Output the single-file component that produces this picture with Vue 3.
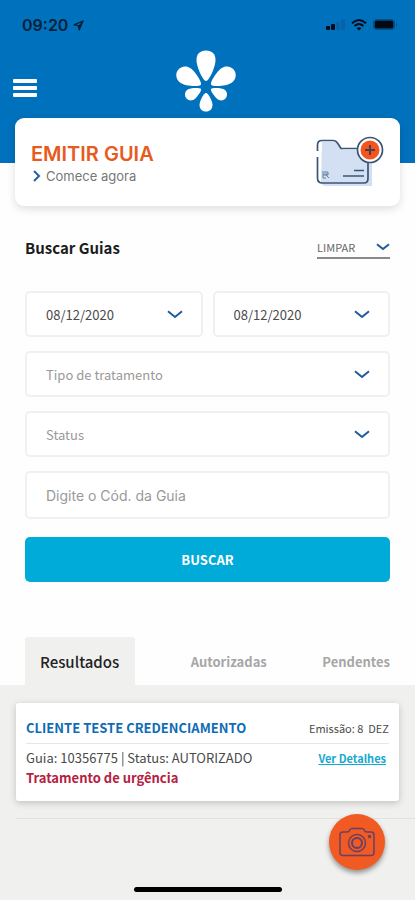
<script setup>
import { ref } from 'vue'

const from = ref('08/12/2020')
const to = ref('08/12/2020')
const type = ref('')
const status = ref('')
const code = ref('')
const sort = ref('LIMPAR')
const active = ref('Resultados')
const tabs = ['Resultados', 'Autorizadas', 'Pendentes']
const guides = [
  { client: 'CLIENTE TESTE CREDENCIAMENTO', date: '8  DEZ', id: '10356775', status: 'AUTORIZADO', kind: 'Tratamento de urgência' }
]
</script>

<template>
  <div class="page">
    <header class="top">
      <div class="statusbar">
        <div class="clock">
          <span>09:20</span>
          <svg width="11" height="11" viewBox="0 0 11 11" aria-hidden="true">
            <path d="M10 1 L6.2 10 L5.4 5.6 L1 4.8 Z" fill="none" stroke="#06213a" stroke-width="1.3" stroke-linejoin="round" />
            <path d="M10 1 L6.2 10 L5.4 5.6 Z" fill="#06213a" />
          </svg>
        </div>
        <div class="signals">
          <svg width="19" height="12" viewBox="0 0 19 12" aria-hidden="true">
            <rect x="0" y="7" width="4" height="4" rx="1" fill="#020b14" />
            <rect x="5" y="5" width="4" height="6" rx="1" fill="#020b14" />
            <rect x="10" y="3" width="4" height="8" rx="1" fill="#0762a8" />
            <rect x="15" y="0" width="4" height="11" rx="1" fill="#0762a8" />
          </svg>
          <svg width="16" height="12" viewBox="0 0 16 12" fill="none" stroke="#020b14" aria-hidden="true">
            <path d="M1 4.3 Q8 -2.2 15 4.3" stroke-width="2" />
            <path d="M3.6 7 Q8 3 12.4 7" stroke-width="1.9" />
            <path d="M8 11.4 L5.6 9.2 Q8 7.2 10.4 9.2 Z" fill="#020b14" stroke="none" />
          </svg>
          <svg width="25" height="12" viewBox="0 0 25 12" aria-hidden="true">
            <rect x="0.5" y="0.5" width="21" height="10" rx="2.5" fill="none" stroke="#06508a" />
            <rect x="1.6" y="1.6" width="18.8" height="7.8" rx="1.5" fill="#020b14" />
            <path d="M23 3.5 Q25 5.5 23 7.5 Z" fill="#06508a" />
          </svg>
        </div>
      </div>
      <div class="brandbar">
        <button class="menu" type="button" aria-label="Menu"><i></i><i></i><i></i></button>
        <svg class="logo" width="60" height="62" viewBox="0 0 60 62" fill="#fff" role="img" aria-label="Logo">
          <path d="M30 31 C27 31 20.500 17 20.500 10 C20.500 4 24 0.500 30 0.500 C36 0.500 39.500 4 39.500 10 C39.500 17 33 31 30 31 Z" />
          <path d="M25 34.5 C24 37 9 36.500 4 32.500 C0 29.500 -1 24 2 20 C5 16 10.500 15.300 15 18.500 C19.500 22 26 32 25 34.500 Z" />
          <path d="M35 34.5 C36 37 51 36.500 56 32.500 C60 29.500 61 24 58 20 C55 16 49.500 15.300 45 18.500 C40.500 22 34 32 35 34.500 Z" />
          <path d="M25 39 C24 37.500 14 37.500 11 40 C8.300 42.300 8.500 46 10.500 48.500 C12.600 51 16.500 51 19 48.800 C21.500 46.500 26 40.500 25 39 Z" />
          <path d="M35 39 C36 37.500 46 37.500 49 40 C51.700 42.300 51.500 46 49.500 48.500 C47.400 51 43.500 51 41 48.800 C38.500 46.500 34 40.500 35 39 Z" />
          <path d="M30 43 C27.800 43 23.500 51 23.500 55 C23.500 58.800 26 61.500 30 61.500 C34 61.500 36.500 58.800 36.500 55 C36.500 51 32.200 43 30 43 Z" />
        </svg>
      </div>
    </header>

    <a class="issue" href="#emitir">
      <span class="issue-text">
        <strong>EMITIR GUIA</strong>
        <span class="start">
          <svg width="8" height="12" viewBox="0 0 8 12" fill="none" stroke="#1f64a0" stroke-width="2" aria-hidden="true"><path d="M1 1 L6 6 L1 11" /></svg>
          Comece agora
        </span>
      </span>
      <svg width="68" height="52" viewBox="0 0 68 52" fill="none" aria-hidden="true">
        <path d="M6 6 H20 L27 14 H56 V50 H10 Q5 50 5 45 Z" fill="#d3e0f3" />
        <path d="M1.500 15 V9 Q1.500 4.500 6 4.500 H17 Q20 4.500 21.500 7 L25 12.500 H42" stroke="#3b5575" stroke-width="1.700" />
        <path d="M1.500 21 V42 Q1.500 47 6.500 47 H48 Q52 47 52 42.500 V26" stroke="#3b5575" stroke-width="1.700" />
        <path d="M38 34.500 H48 M27 40 H48" stroke="#3b5575" stroke-width="1.600" />
        <path d="M6 36 H12 V39 H7 V42 H10 M6 38 H12 M10 39 L13 42" stroke="#6580a3" stroke-width="1" />
        <circle cx="54" cy="14" r="12.500" fill="#fff" stroke="#3b5575" stroke-width="1.700" />
        <circle cx="54" cy="14" r="9.500" fill="#f4541d" />
        <path d="M54 9 V19 M49 14 H59" stroke="#4b3a50" stroke-width="2" />
      </svg>
    </a>

    <form class="search" @submit.prevent>
      <div class="search-head">
        <h1>Buscar Guias</h1>
        <div class="pick clear">
          <select v-model="sort" aria-label="Limpar filtros"><option>LIMPAR</option></select>
          <svg width="14" height="8" viewBox="0 0 14 8" aria-hidden="true"><path d="M1 1.200 L7 6 L13 1.200" /></svg>
        </div>
      </div>
      <div class="dates">
        <div class="pick box date">
          <select v-model="from" aria-label="Data inicial"><option>08/12/2020</option></select>
          <svg width="16" height="9" viewBox="0 0 16 9" aria-hidden="true"><path d="M1 1.200 L8 7 L15 1.200" /></svg>
        </div>
        <div class="pick box date">
          <select v-model="to" aria-label="Data final"><option>08/12/2020</option></select>
          <svg width="16" height="9" viewBox="0 0 16 9" aria-hidden="true"><path d="M1 1.200 L8 7 L15 1.200" /></svg>
        </div>
      </div>
      <div class="pick box">
        <select v-model="type" aria-label="Tipo de tratamento"><option value="">Tipo de tratamento</option></select>
        <svg width="16" height="9" viewBox="0 0 16 9" aria-hidden="true"><path d="M1 1.200 L8 7 L15 1.200" /></svg>
      </div>
      <div class="pick box">
        <select v-model="status" aria-label="Status"><option value="">Status</option></select>
        <svg width="16" height="9" viewBox="0 0 16 9" aria-hidden="true"><path d="M1 1.200 L8 7 L15 1.200" /></svg>
      </div>
      <input v-model="code" class="code" type="text" placeholder="Digite o Cód. da Guia" aria-label="Código da guia" />
      <button class="submit" type="submit">BUSCAR</button>
    </form>

    <nav class="tabs">
      <button v-for="t in tabs" :key="t" type="button" :class="{ on: t === active }" @click="active = t">{{ t }}</button>
    </nav>

    <main class="results">
      <article v-for="g in guides" :key="g.id" class="guide">
        <div class="guide-head">
          <h2>{{ g.client }}</h2>
          <span class="issued">Emissão: {{ g.date }}</span>
        </div>
        <div class="guide-row">
          <span>Guia: {{ g.id }} | Status: {{ g.status }}</span>
          <a href="#detalhes">Ver Detalhes</a>
        </div>
        <p>{{ g.kind }}</p>
      </article>
      <hr />
    </main>

    <button class="camera" type="button" aria-label="Abrir câmera">
      <svg width="36" height="30" viewBox="0 0 36 30" fill="none" stroke="#674064" stroke-width="1.500" aria-hidden="true">
        <path d="M4 5 H8 Q10 5 10.500 3.500 Q11 1.500 13 1.500 H23 Q25 1.500 25.500 3.500 Q26 5 28 5 H32 Q35 5 35 8 V25.500 Q35 28.500 32 28.500 H4 Q1 28.500 1 25.500 V8 Q1 5 4 5 Z" />
        <circle cx="18" cy="16" r="8.500" />
        <circle cx="18" cy="16" r="5" stroke-width="2" />
        <circle cx="30.500" cy="9.500" r="1" />
      </svg>
    </button>
    <div class="home"></div>
  </div>
</template>

<style>
body {
  background: #fefefe;
}
</style>

<style scoped>
.page {
  position: relative;
  display: flex;
  flex-direction: column;
  min-height: 100vh;
  font-family: "Noto Sans CJK JP", "Noto Sans", sans-serif;
  color: #4a4a4a;
}
.page * {
  box-sizing: border-box;
}
button, select, input {
  font: inherit;
  color: inherit;
  border: 0;
  padding: 0;
  background: none;
}
.top {
  background: #0071bc;
  padding: 15px 17px 51px 13px;
}
.statusbar {
  display: flex;
  justify-content: space-between;
  align-items: center;
  height: 20px;
  padding-left: 9px;
}
.clock {
  display: flex;
  align-items: center;
  gap: 5px;
  font: 600 16px/20px Inter, sans-serif;
  color: #06213a;
}
.signals {
  display: flex;
  align-items: center;
  gap: 6px;
}
.brandbar {
  display: grid;
  grid-template-columns: 1fr auto 1fr;
  align-items: center;
  padding-top: 15px;
}
.menu {
  display: flex;
  flex-direction: column;
  gap: 3px;
  width: 24px;
  margin-top: 14px;
}
.menu i {
  height: 4px;
  border-radius: 1px;
  background: #fff;
}
.issue {
  display: flex;
  justify-content: space-between;
  align-items: center;
  margin: -45px 15px 0;
  height: 88px;
  padding: 0 16px;
  border-radius: 9px;
  background: #fff;
  box-shadow: 0 3px 8px rgba(0, 0, 0, 0.13);
  text-decoration: none;
}
.issue-text {
  display: flex;
  flex-direction: column;
  padding-top: 4px;
}
.issue strong {
  font: 600 20px/24px Inter, sans-serif;
  color: #e75a20;
}
.start {
  display: flex;
  align-items: center;
  gap: 5px;
  padding-left: 2px;
  font: 400 13px/20px Inter, sans-serif;
  color: #777;
}
.search {
  display: flex;
  flex-direction: column;
  gap: 14px;
  padding: 30px 25px 0;
}
.search-head {
  display: flex;
  justify-content: space-between;
  align-items: center;
  height: 24px;
  margin-bottom: 17px;
}
h1 {
  margin: 0;
  font-size: 15px;
  line-height: 24px;
  font-weight: 700;
  color: #1c1c1c;
}
.pick {
  position: relative;
  display: flex;
  align-items: center;
}
.pick select {
  appearance: none;
  flex: 1;
  width: 100%;
  height: 100%;
}
.pick svg {
  position: absolute;
  right: 18px;
  fill: none;
  stroke: #1f5c9c;
  stroke-width: 2;
  pointer-events: none;
}
.clear {
  width: 73px;
  height: 22px;
  border-bottom: 2px solid #8a8a8a;
  font-size: 11px;
  color: #666;
}
.clear svg {
  right: 0;
}
.dates {
  display: grid;
  grid-template-columns: 1fr 1fr;
  gap: 10px;
}
.box, .code {
  height: 46px;
  border: 2px solid #f0f0f0;
  border-radius: 5px;
  background: #fff;
  font-size: 13px;
  color: #999;
}
.box select {
  padding-left: 19px;
}
.date {
  color: #4a4a4a;
}
.code {
  height: 48px;
  padding: 0 19px;
  font-family: Inter, sans-serif;
  font-size: 14px;
}
.code::placeholder {
  color: #999;
  opacity: 1;
}
.submit {
  height: 45px;
  margin-top: 4px;
  border-radius: 5px;
  background: #00aad9;
  color: #fff;
  font-size: 13px;
  font-weight: 700;
}
.tabs {
  display: flex;
  justify-content: space-between;
  margin-top: 55px;
  padding: 0 25px;
}
.tabs button {
  height: 48px;
  font-size: 13px;
  font-weight: 700;
  color: #a6a6a6;
}
.tabs .on {
  padding: 0 16px 0 15px;
  border-radius: 3px 3px 0 0;
  background: #f0f0ee;
  font-size: 15px;
  font-weight: 500;
  color: #222;
}
.results {
  flex: 1;
  padding: 18px 0 0 16px;
  background: #f0f0ee;
}
.guide {
  margin-right: 16px;
  height: 98px;
  padding: 14px 10px 0;
  border-radius: 3px;
  background: #fff;
  box-shadow: 0 2px 7px rgba(0, 0, 0, 0.2);
}
.guide-head, .guide-row {
  display: flex;
  justify-content: space-between;
  align-items: center;
}
.guide-head {
  height: 27px;
  padding-bottom: 4px;
  border-bottom: 1px solid #e6e6e6;
}
h2 {
  margin: 0;
  font-size: 13px;
  line-height: 20px;
  font-weight: 700;
  color: #0f6cb5;
}
.issued {
  font-size: 11px;
  line-height: 20px;
  white-space: pre;
}
.guide-row {
  margin-top: 4px;
  padding-right: 3px;
  font-size: 13px;
  line-height: 20px;
}
.guide-row a {
  font-size: 11px;
  font-weight: 700;
  color: #16a9cf;
}
.guide p {
  margin: 0;
  font-size: 13px;
  line-height: 20px;
  font-weight: 700;
  color: #b5213f;
}
hr {
  margin: 17px 0 0;
  border: 0;
  border-top: 1px solid #e2e2e2;
}
.camera {
  position: absolute;
  right: 30px;
  bottom: 30px;
  display: flex;
  align-items: center;
  justify-content: center;
  width: 56px;
  height: 56px;
  border-radius: 50%;
  background: #f15a22;
  box-shadow: 0 3px 5px rgba(0, 0, 0, 0.4);
}
.home {
  position: absolute;
  left: 50%;
  bottom: 8px;
  width: 148px;
  height: 5px;
  margin-left: -74px;
  border-radius: 3px;
  background: #000;
}
</style>
